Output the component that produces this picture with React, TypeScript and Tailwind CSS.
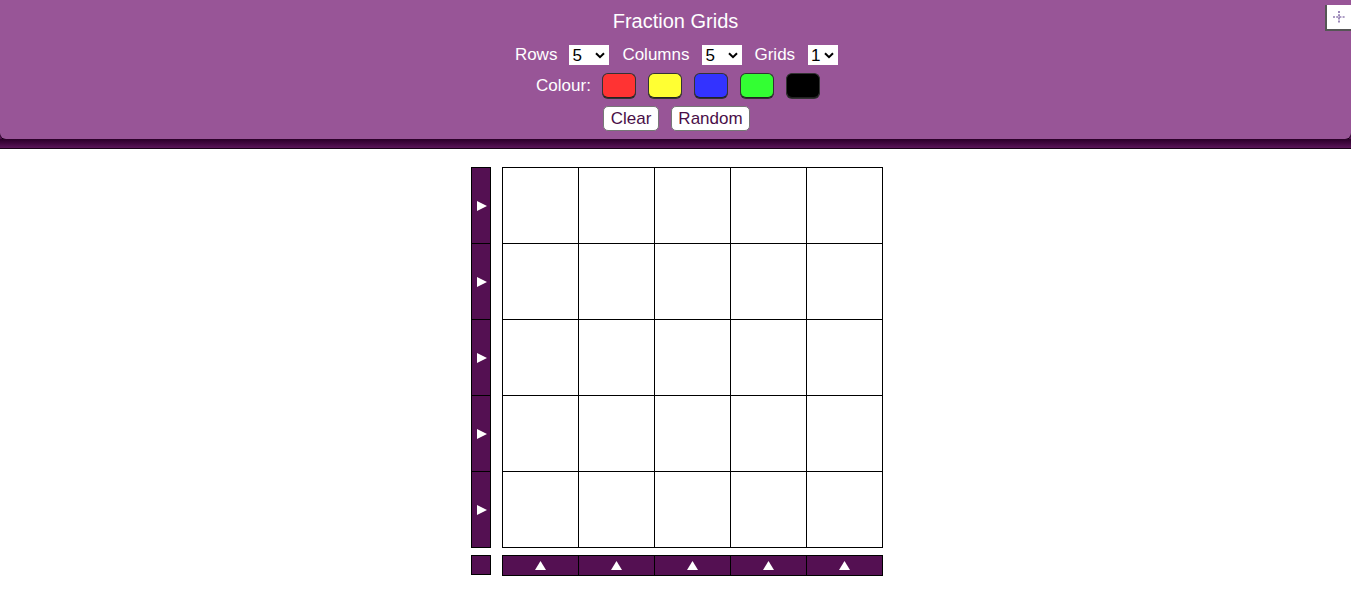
import React from "react";

const Chevron = () => (
  <svg width="10" height="7" viewBox="0 0 10 7" className="shrink-0">
    <path d="M1 1.2 L5 5.2 L9 1.2" stroke="#000" strokeWidth="2" fill="none" />
  </svg>
);

function Sel({ value, w }: { value: string; w: string }) {
  return (
    <div className={`flex h-[20px] ${w} items-center justify-between bg-white pl-[3px] pr-[4px] text-[17px] leading-none text-black`}>
      <span>{value}</span>
      <Chevron />
    </div>
  );
}

const Right = () => (
  <svg width="10" height="10" viewBox="0 0 10 10">
    <path d="M0 0 L10 5 L0 10 Z" fill="#fff" />
  </svg>
);
const Up = () => (
  <svg width="11" height="9" viewBox="0 0 11 9">
    <path d="M5.5 0 L11 9 L0 9 Z" fill="#fff" />
  </svg>
);

const colours = ["#ff3333", "#ffff33", "#3333ff", "#33ff33", "#000000"];

export default function App() {
  const rows = [0, 1, 2, 3, 4];
  const cols = [0, 1, 2, 3, 4];
  return (
    <div className="relative min-h-[590px] w-[1351px] bg-white" style={{ fontFamily: '"Liberation Sans", Arial, sans-serif' }}>
      <div className="bg-[#540f52]">
        <div className="flex h-[139px] flex-col items-center rounded-b-[6px] bg-[#985597] text-white shadow-[0_1px_0_#120011]">
          <div className="mt-[8px] text-[20px] leading-[26px]">Fraction Grids</div>
          <div className="mt-[11px] ml-[2px] flex items-center text-[17px] leading-[20px]">
            <span>Rows</span>
            <div className="ml-[12px]"><Sel value="5" w="w-[40px]" /></div>
            <span className="ml-[13px]">Columns</span>
            <div className="ml-[13px]"><Sel value="5" w="w-[40px]" /></div>
            <span className="ml-[12px]">Grids</span>
            <div className="ml-[13px]"><Sel value="1" w="w-[30px]" /></div>
          </div>
          <div className="mt-[8px] ml-[5px] flex items-center text-[17px] leading-[25px]">
            <span className="mr-[11px]">Colour:</span>
            <div className="flex gap-[12px]">
              {colours.map((c) => (
                <div key={c} className="h-[25px] w-[34px] rounded-[6px] border border-[#333] border-b-[#222] shadow-[0_1px_0_#333]" style={{ backgroundColor: c }} />
              ))}
            </div>
          </div>
          <div className="mt-[8px] ml-[2px] flex gap-[12px] text-[17px] leading-[22px] text-[#4a0f48]">
            <div className="flex h-[25px] w-[56px] items-center justify-center rounded-[5px] border border-[#777] bg-white pt-[1px]">Clear</div>
            <div className="flex h-[25px] w-[79px] items-center justify-center rounded-[5px] border border-[#777] bg-white pt-[1px]">Random</div>
          </div>
        </div>
        <div className="h-[10px] bg-gradient-to-b from-[#2a0028] to-[#5a1558] border-b border-[#1a0018]" />
      </div>

      <div className="flex justify-center pt-[18px]">
        <div className="ml-[3px] flex flex-col">
          <div className="flex">
            <div className="flex w-[20px] flex-col border-t border-l border-black">
              {rows.map((r) => (
                <div key={r} className="flex h-[76px] items-center justify-center border-r border-b border-black bg-[#541052] pl-[1px]"><Right /></div>
              ))}
            </div>
            <div className="ml-[11px] flex flex-col border-t border-l border-black">
              {rows.map((r) => (
                <div key={r} className="flex">
                  {cols.map((c) => (
                    <div key={c} className="h-[76px] w-[76px] border-r border-b border-black bg-white" />
                  ))}
                </div>
              ))}
            </div>
          </div>
          <div className="mt-[7px] flex">
            <div className="h-[20px] w-[20px] border border-black bg-[#541052]" />
            <div className="ml-[11px] flex border-t border-l border-black">
              {cols.map((c) => (
                <div key={c} className="flex h-[20px] w-[76px] items-center justify-center border-r border-b border-black bg-[#541052]"><Up /></div>
              ))}
            </div>
          </div>
        </div>
      </div>

      <div className="absolute right-0 top-[5px] flex h-[26px] w-[26px] items-center justify-center border-b-2 border-l-2 border-[#555] bg-white">
        <svg width="14" height="14" viewBox="0 0 14 14">
          <path d="M7 1v12M1 7h12" stroke="#5a3a8a" strokeWidth="1.2" strokeDasharray="2 1.2" />
        </svg>
      </div>
    </div>
  );
}
